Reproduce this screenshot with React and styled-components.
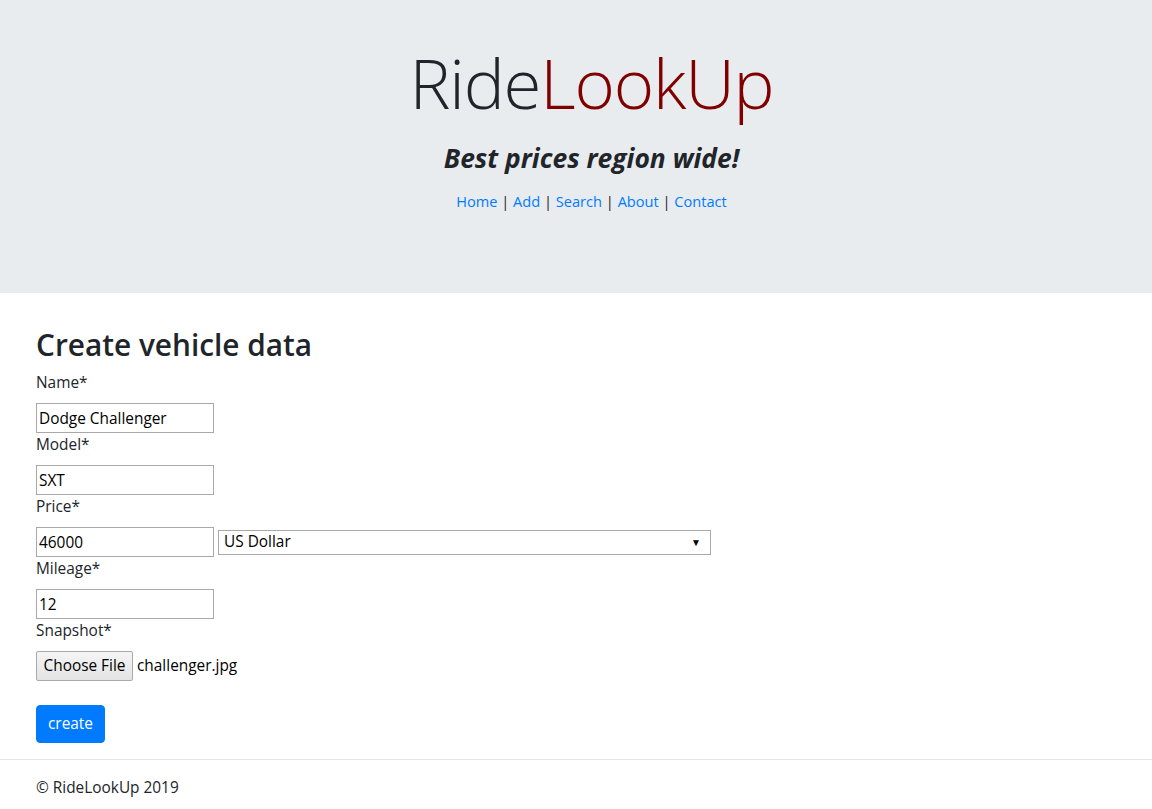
import React from "react";
import styled, { createGlobalStyle } from "styled-components";

const Global = createGlobalStyle`
  html, body { margin: 0; padding: 0; }
  body {
    font-family: "Open Sans", "Noto Sans", sans-serif;
    font-size: 15.4px;
    line-height: 24px;
    color: #212529;
    background: #fff;
  }
  * { box-sizing: border-box; }
`;

const Jumbotron = styled.header`
  background: #e9ecef;
  height: 293px;
  padding: 41px 0 0 31px;
  display: flex;
  flex-direction: column;
  align-items: center;
`;

const Title = styled.h1`
  margin: 0;
  font-size: 69px;
  font-weight: 300;
  line-height: 1.2;
  letter-spacing: -1.2px;
`;

const Ride = styled.span`color: #212529;`;
const LookUp = styled.span`color: #800000;`;

const Tagline = styled.h3`
  margin: 19px 0 0;
  font-size: 26.4px;
  font-weight: 700;
  font-style: italic;
  line-height: 1.2;
`;

const Nav = styled.nav`
  margin-top: 15px;
  font-size: 14.6px;
`;

const NavLink = styled.a`
  color: #007bff;
  text-decoration: none;
`;

const Main = styled.main`
  padding: 33px 36px 0;
`;

const Heading = styled.h2`
  margin: 0 0 7px;
  font-size: 29.8px;
  font-weight: 600;
  line-height: 38px;
`;

const Label = styled.label`
  display: block;
  margin-bottom: 8px;
`;

const Row = styled.div`
  display: flex;
  align-items: center;
  gap: 4px;
`;

const Input = styled.input`
  width: 178px;
  height: 30px;
  border: 1px solid #a9a9a9;
  padding: 0 2px;
  font: inherit;
  color: #000;
  margin: 0;
`;

const SelectBox = styled.div`
  width: 493px;
  height: 25px;
  border: 1px solid #a9a9a9;
  display: flex;
  align-items: center;
  padding: 0 5px;
  color: #000;
  background: #fff;
`;

const Arrow = styled.span`
  margin-left: auto;
  font-size: 10px;
  margin-right: 4px;
`;

const FileButton = styled.button`
  height: 30px;
  width: 97px;
  padding: 0;
  font: inherit;
  color: #000;
  border: 1px solid #a9a9a9;
  border-radius: 2px;
  background: linear-gradient(#f5f5f5, #e3e3e3);
`;

const FileName = styled.span`
  color: #000;
`;

const SubmitButton = styled.button`
  margin-top: 24px;
  font: inherit;
  height: 38px;
  padding: 0 11px;
  border: 1px solid #007bff;
  border-radius: 4px;
  background: #007bff;
  color: #fff;
`;

const Rule = styled.hr`
  margin: 16px 0 0;
  border: 0;
  border-top: 1px solid rgba(0, 0, 0, 0.1);
`;

const Footer = styled.footer`
  padding: 16px 36px;
`;

const links = ["Home", "Add", "Search", "About", "Contact"];

export default function App() {
  return (
    <>
      <Global />
      <Jumbotron>
        <Title>
          <Ride>Ride</Ride>
          <LookUp>LookUp</LookUp>
        </Title>
        <Tagline>Best prices region wide!</Tagline>
        <Nav>
          {links.map((l, i) => (
            <React.Fragment key={l}>
              {i > 0 && " | "}
              <NavLink href="#">{l}</NavLink>
            </React.Fragment>
          ))}
        </Nav>
      </Jumbotron>
      <Main>
        <Heading>Create vehicle data</Heading>
        <Label>Name*</Label>
        <Input defaultValue="Dodge Challenger" />
        <Label>Model*</Label>
        <Input defaultValue="SXT" />
        <Label>Price*</Label>
        <Row>
          <Input defaultValue="46000" />
          <SelectBox>
            US Dollar
            <Arrow>▼</Arrow>
          </SelectBox>
        </Row>
        <Label>Mileage*</Label>
        <Input defaultValue="12" />
        <Label>Snapshot*</Label>
        <Row>
          <FileButton>Choose File</FileButton>
          <FileName>challenger.jpg</FileName>
        </Row>
        <SubmitButton>create</SubmitButton>
      </Main>
      <Rule />
      <Footer>© RideLookUp 2019</Footer>
    </>
  );
}
